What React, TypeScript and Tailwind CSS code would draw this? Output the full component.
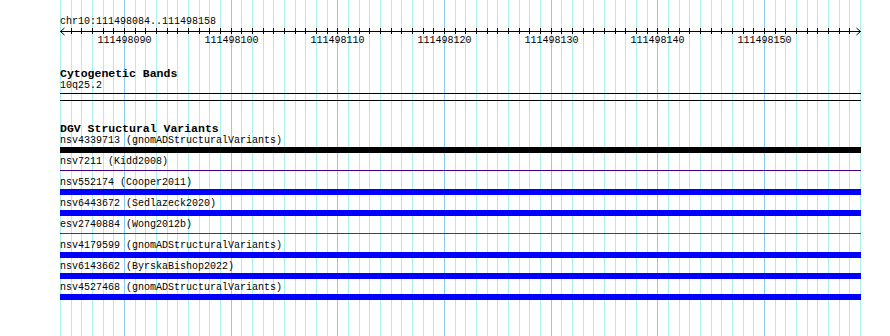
import React from "react";

const PX = 800 / 75;
const START = 60;
const lineXs = Array.from({ length: 76 }, (_, i) => Math.round(START + i * PX));
const majors = [6, 16, 26, 36, 46, 56, 66];
const majorLabels = ["111498090", "111498100", "111498110", "111498120", "111498130", "111498140", "111498150"];

type Row = { label: string; kind: "bar" | "line"; cls: string };
const rows: Row[] = [
  { label: "nsv4339713 (gnomADStructuralVariants)", kind: "bar", cls: "bg-black" },
  { label: "nsv7211 (Kidd2008)", kind: "line", cls: "bg-[#4b0082]" },
  { label: "nsv552174 (Cooper2011)", kind: "bar", cls: "bg-[#0000ff]" },
  { label: "nsv6443672 (Sedlazeck2020)", kind: "bar", cls: "bg-[#0000ff]" },
  { label: "esv2740884 (Wong2012b)", kind: "line", cls: "bg-[#dd0000]" },
  { label: "nsv4179599 (gnomADStructuralVariants)", kind: "bar", cls: "bg-[#0000ff]" },
  { label: "nsv6143662 (ByrskaBishop2022)", kind: "bar", cls: "bg-[#0000ff]" },
  { label: "nsv4527468 (gnomADStructuralVariants)", kind: "bar", cls: "bg-[#0000ff]" },
];

function Grid() {
  return (
    <svg className="absolute inset-0" width={890} height={336} shapeRendering="crispEdges">
      {lineXs.map((x, i) => (
        <rect
          key={i}
          x={x}
          y={0}
          width={1}
          height={336}
          fill={majors.includes(i) ? "#88ccee" : "#aaeeee"}
        />
      ))}
    </svg>
  );
}

function Ruler() {
  return (
    <div className="relative h-[68px] w-[801px]">
      <div className="pt-[16px] leading-[12px]">chr10:111498084..111498158</div>
      <svg className="absolute left-0 top-[26px]" width={801} height={10} shapeRendering="crispEdges">
        <rect x={0} y={5} width={801} height={1} fill="#000" />
        {lineXs.slice(1, 75).map((x, i) => (
          <rect key={i} x={x - START} y={2} width={1} height={6} fill="#000" />
        ))}
        <path d="M0.5 5.5 L4.5 2 M0.5 5.5 L4.5 9" stroke="#000" strokeWidth={1} fill="none" shapeRendering="auto" />
        <path d="M800.5 5.5 L796.5 2 M800.5 5.5 L796.5 9" stroke="#000" strokeWidth={1} fill="none" shapeRendering="auto" />
      </svg>
      {majors.map((m, i) => (
        <div
          key={m}
          className="absolute top-[35px] -translate-x-1/2 leading-[12px]"
          style={{ left: lineXs[m] - START + 0.5 }}
        >
          {majorLabels[i]}
        </div>
      ))}
    </div>
  );
}

export default function App() {
  return (
    <div className="relative w-[890px] h-[336px] overflow-hidden bg-white text-black font-['Liberation_Mono',monospace] text-[10px]">
      <Grid />
      <div className="relative flex flex-col pl-[60px]">
        <Ruler />
        <div className="font-bold text-[11.5px] leading-[12px]">Cytogenetic Bands</div>
        <div className="leading-[12px]">10q25.2</div>
        <div className="mt-px h-px w-[801px] bg-black" />
        <div className="mt-[6px] h-px w-[801px] bg-black" />
        <div className="mt-[22px] font-bold text-[11.5px] leading-[12px]">DGV Structural Variants</div>
        {rows.map((r) => (
          <div key={r.label} className="flex flex-col mb-[3px]">
            <div className="leading-[12px] whitespace-pre">{r.label}</div>
            {r.kind === "bar" ? (
              <div className={`h-[6px] w-[801px] ${r.cls}`} />
            ) : (
              <div className="h-[6px] w-[801px] pt-[2px]">
                <div className={`h-px w-full ${r.cls}`} />
              </div>
            )}
          </div>
        ))}
      </div>
    </div>
  );
}
